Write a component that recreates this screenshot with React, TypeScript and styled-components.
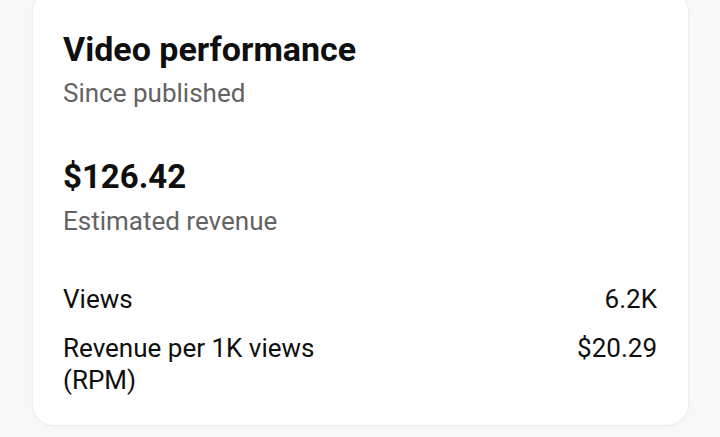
import React from 'react';
import styled, { createGlobalStyle } from 'styled-components';

const GlobalStyle = createGlobalStyle`
  html, body {
    margin: 0;
    padding: 0;
    background: #f8f8f8;
  }
  body {
    font-family: Roboto, "Noto Sans", "Liberation Sans", sans-serif;
    color: #0f0f0f;
    overflow: hidden;
  }
`;

const Page = styled.div`
  width: 720px;
  height: 437px;
  overflow: hidden;
`;

const Card = styled.section`
  margin: -10px 31px 0 32px;
  padding: 40px 31px 29px 30px;
  background: #fff;
  border: 1px solid #eeeeee;
  border-radius: 22px;
  box-shadow: 0 1px 3px rgba(0, 0, 0, 0.03);
`;

const Title = styled.h2`
  margin: 0;
  font-size: 34px;
  line-height: 36px;
  font-weight: 700;
  color: #0f0f0f;
`;

const Caption = styled.div<{ $gap?: number }>`
  margin-top: ${(p) => p.$gap ?? 0}px;
  font-size: 26px;
  line-height: 32px;
  color: #636363;
`;

const Amount = styled.div`
  margin-top: 48px;
  font-size: 33px;
  line-height: 40px;
  font-weight: 700;
  color: #0f0f0f;
`;

const Stats = styled.div`
  margin-top: 46px;
  display: flex;
  flex-direction: column;
  gap: 17px;
`;

const Row = styled.div`
  display: flex;
  justify-content: space-between;
  align-items: flex-start;
  font-size: 26px;
  line-height: 32px;
  color: #0f0f0f;
`;

const Label = styled.span`
  max-width: 290px;
`;

const Value = styled.span`
  text-align: right;
`;

const stats = [
  { label: 'Views', value: '6.2K' },
  { label: 'Revenue per 1K views (RPM)', value: '$20.29' },
];

export default function App() {
  return (
    <Page>
      <GlobalStyle />
      <Card>
        <Title>Video performance</Title>
        <Caption $gap={10}>Since published</Caption>
        <Amount>$126.42</Amount>
        <Caption $gap={8}>Estimated revenue</Caption>
        <Stats>
          {stats.map((s) => (
            <Row key={s.label}>
              <Label>{s.label}</Label>
              <Value>{s.value}</Value>
            </Row>
          ))}
        </Stats>
      </Card>
    </Page>
  );
}
